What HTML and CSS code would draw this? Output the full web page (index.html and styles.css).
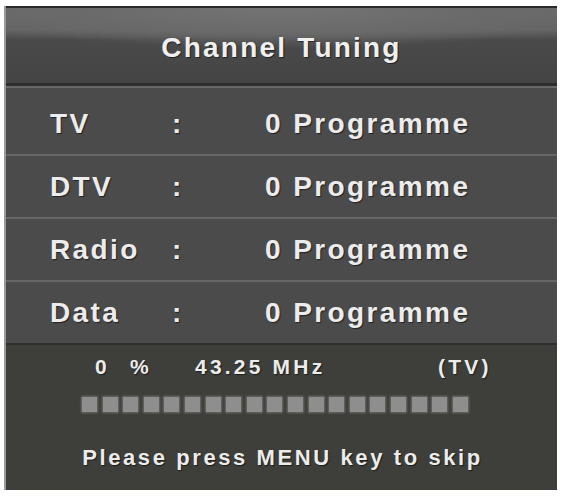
FILE: index.html
```html
<!DOCTYPE html>
<html>
<head>
<meta charset="utf-8">
<link rel="stylesheet" href="styles.css">
</head>
<body>
<div class="panel">
  <div class="header">Channel Tuning</div>
  <div class="rows">
    <div class="row first"><span class="label">TV</span><span class="colon">:</span><span class="value">0 Programme</span></div>
    <div class="row"><span class="label">DTV</span><span class="colon">:</span><span class="value">0 Programme</span></div>
    <div class="row"><span class="label">Radio</span><span class="colon">:</span><span class="value">0 Programme</span></div>
    <div class="row last"><span class="label">Data</span><span class="colon">:</span><span class="value">0 Programme</span></div>
  </div>
  <div class="status">
    <div class="info"><span>0</span><span>%</span><span>43.25 MHz</span><span>(TV)</span></div>
    <div class="progress">
      <i></i><i></i><i></i><i></i><i></i><i></i><i></i><i></i><i></i><i></i>
      <i></i><i></i><i></i><i></i><i></i><i></i><i></i><i></i><i></i>
    </div>
    <div class="message">Please press MENU key to skip</div>
  </div>
</div>
</body>
</html>
```

FILE: styles.css
```css
html, body {
  margin: 0;
  padding: 0;
  background: #ffffff;
}
body {
  width: 562px;
  height: 496px;
  overflow: hidden;
  font-family: "Liberation Sans", Arial, sans-serif;
  font-weight: bold;
  color: #ececec;
}
.panel {
  margin: 6px 0 0 4px;
  width: 553px;
  height: 484px;
  background: #4b4b4b;
  border-left: 2px solid #9a9a9a;
  box-sizing: border-box;
  display: flex;
  flex-direction: column;
  text-shadow: 1px 1px 1px rgba(0, 0, 0, 0.55);
}
.header {
  height: 80px;
  box-sizing: border-box;
  border-top: 2px solid #2a2a2a;
  border-bottom: 3px solid #2e2e2e;
  background:
    radial-gradient(ellipse 62% 40px at 50% 0, #747474 0, #6a6a6a 60%, rgba(106,106,106,0) 100%),
    linear-gradient(#6a6a6a 0, #646464 22px, #4a4a4a 32px, #444444 100%);
  display: flex;
  align-items: center;
  justify-content: center;
  font-size: 28px;
  letter-spacing: 2.2px;
  padding-top: 4px;
  color: #f0f0f0;
}
.rows {
  display: flex;
  flex-direction: column;
  border-top: 2px solid #6a6a6a;
}
.row {
  height: 63px;
  box-sizing: border-box;
  display: grid;
  grid-template-columns: 122px 93px auto;
  align-items: center;
  padding-left: 44px;
  border-bottom: 2px solid #666666;
  font-size: 28px;
  letter-spacing: 2.4px;
}
.row.first {
  height: 68px;
  padding-top: 6px;
}
.row.last {
  border-bottom: 2px solid #2f2f2f;
}
.status {
  flex: 1;
  background: #3e3f3b;
  display: flex;
  flex-direction: column;
}
.info {
  display: grid;
  grid-template-columns: 35px 65px 243px auto;
  padding-left: 89px;
  font-size: 21px;
  letter-spacing: 3.2px;
  margin-top: 9px;
  height: 26px;
  align-items: center;
}
.progress {
  display: flex;
  gap: 5.6px;
  padding-left: 76px;
  margin-top: 17px;
}
.progress i {
  display: block;
  width: 15px;
  height: 15px;
  background: #8e8e8e;
  box-shadow: 0 0 2px 1px rgba(142, 142, 142, 0.6);
}
.message {
  text-align: center;
  font-size: 22px;
  letter-spacing: 2.6px;
  margin-top: 33px;
  padding-left: 2px;
}
```
